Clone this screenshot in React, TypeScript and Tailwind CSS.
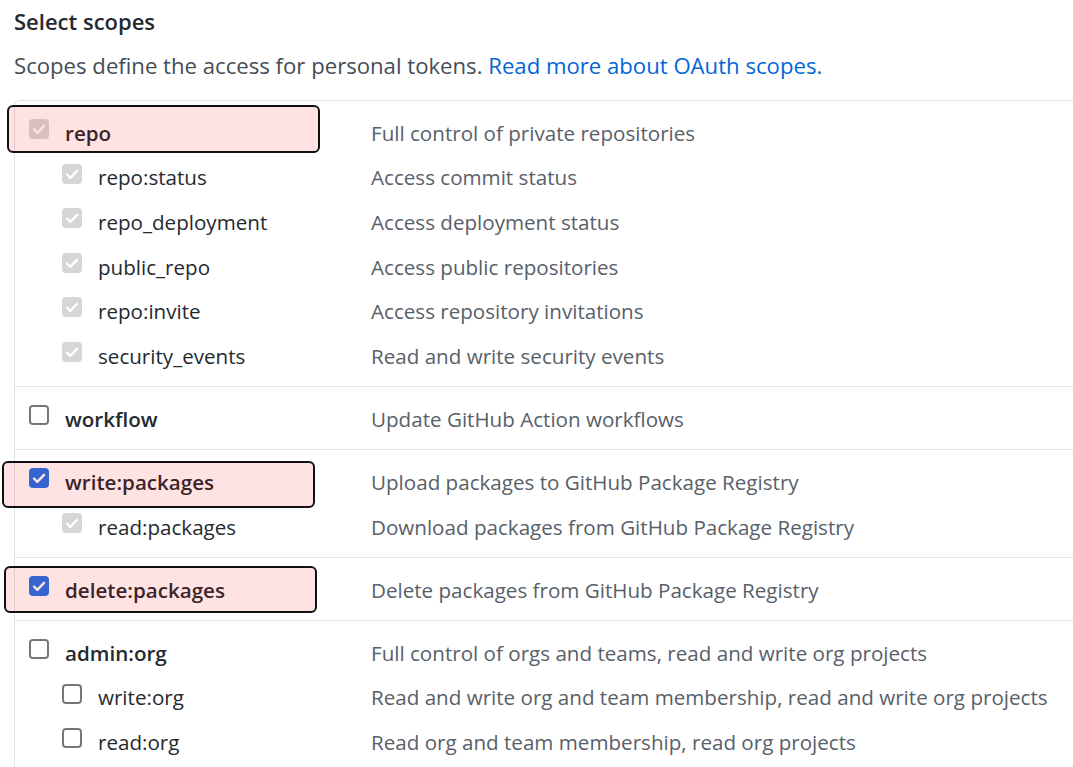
import React from 'react';

type BoxState = 'locked' | 'checked' | 'empty';

interface Scope {
  name: string;
  desc: string;
  state: BoxState;
  sub?: boolean;
}

const groups: Scope[][] = [
  [
    { name: 'repo', desc: 'Full control of private repositories', state: 'locked' },
    { name: 'repo:status', desc: 'Access commit status', state: 'locked', sub: true },
    { name: 'repo_deployment', desc: 'Access deployment status', state: 'locked', sub: true },
    { name: 'public_repo', desc: 'Access public repositories', state: 'locked', sub: true },
    { name: 'repo:invite', desc: 'Access repository invitations', state: 'locked', sub: true },
    { name: 'security_events', desc: 'Read and write security events', state: 'locked', sub: true },
  ],
  [{ name: 'workflow', desc: 'Update GitHub Action workflows', state: 'empty' }],
  [
    { name: 'write:packages', desc: 'Upload packages to GitHub Package Registry', state: 'checked' },
    { name: 'read:packages', desc: 'Download packages from GitHub Package Registry', state: 'locked', sub: true },
  ],
  [{ name: 'delete:packages', desc: 'Delete packages from GitHub Package Registry', state: 'checked' }],
  [
    { name: 'admin:org', desc: 'Full control of orgs and teams, read and write org projects', state: 'empty' },
    { name: 'write:org', desc: 'Read and write org and team membership, read and write org projects', state: 'empty', sub: true },
    { name: 'read:org', desc: 'Read org and team membership, read org projects', state: 'empty', sub: true },
  ],
];

function Check() {
  return (
    <svg viewBox="0 0 20 20" className="w-[20px] h-[20px]">
      <path d="M5 10.5l3.3 3.3L15 6.8" fill="none" stroke="white" strokeWidth="2.4" strokeLinecap="round" strokeLinejoin="round" />
    </svg>
  );
}

function Checkbox({ state }: { state: BoxState }) {
  if (state === 'empty') {
    return <div className="w-[20px] h-[20px] shrink-0 mt-[8px] rounded-[4px] border-2 border-[#777777] bg-white" />;
  }
  return (
    <div
      className={
        state === 'checked'
          ? 'w-[20px] h-[20px] shrink-0 mt-[8px] rounded-[4px] bg-[#1d72e8]'
          : 'w-[20px] h-[20px] shrink-0 mt-[8px] rounded-[4px] bg-[#d6d6d6]'
      }
    >
      <Check />
    </div>
  );
}

export default function App() {
  return (
    <div className="relative w-[1073px] h-[767px] overflow-hidden bg-white pt-[5px]" style={{ fontFamily: '"Open Sans", "Noto Sans", sans-serif' }}>
      <h3 className="pl-[14px] text-[22px] leading-[33px] font-semibold text-[#24292e]">Select scopes</h3>
      <p className="pl-[14px] mt-[11px] text-[22.15px] leading-[33px] text-[#444d56]">
        Scopes define the access for personal tokens.{' '}
        <a className="text-[#0366d6]">Read more about OAuth scopes.</a>
      </p>

      <div className="ml-[14px] mt-[18px] w-[1100px] border-l border-t border-[#e1e4e8] rounded-tl-[6px] text-[20.6px]">
        {groups.map((g, gi) => (
          <div key={gi} className={gi === 0 ? 'pt-[10px] pb-[7.5px]' : 'pt-[10px] pb-[7.5px] border-t border-[#e1e4e8]'}>
            {g.map((s) => (
              <div key={s.name} className="flex h-[44.6px]">
                <div className={s.sub ? 'w-[356px] shrink-0 flex pl-[47px]' : 'w-[356px] shrink-0 flex pl-[14px]'}>
                  <Checkbox state={s.state} />
                  <span className={s.sub ? 'ml-[16px] self-center text-[#24292e]' : 'ml-[16px] self-center font-semibold text-[#24292e]'}>
                    {s.name}
                  </span>
                </div>
                <span className="self-center text-[#586069] whitespace-nowrap">{s.desc}</span>
              </div>
            ))}
          </div>
        ))}
      </div>

      {/* annotation boxes */}
      <div className="absolute left-[7px] top-[105px] w-[313px] h-[48px] rounded-[6px] border-2 border-[#111] bg-[#ff0000]/[0.11] pointer-events-none" />
      <div className="absolute left-[2px] top-[461px] w-[313px] h-[47px] rounded-[6px] border-2 border-[#111] bg-[#ff0000]/[0.11] pointer-events-none" />
      <div className="absolute left-[4px] top-[566px] w-[313px] h-[47px] rounded-[6px] border-2 border-[#111] bg-[#ff0000]/[0.11] pointer-events-none" />
    </div>
  );
}
